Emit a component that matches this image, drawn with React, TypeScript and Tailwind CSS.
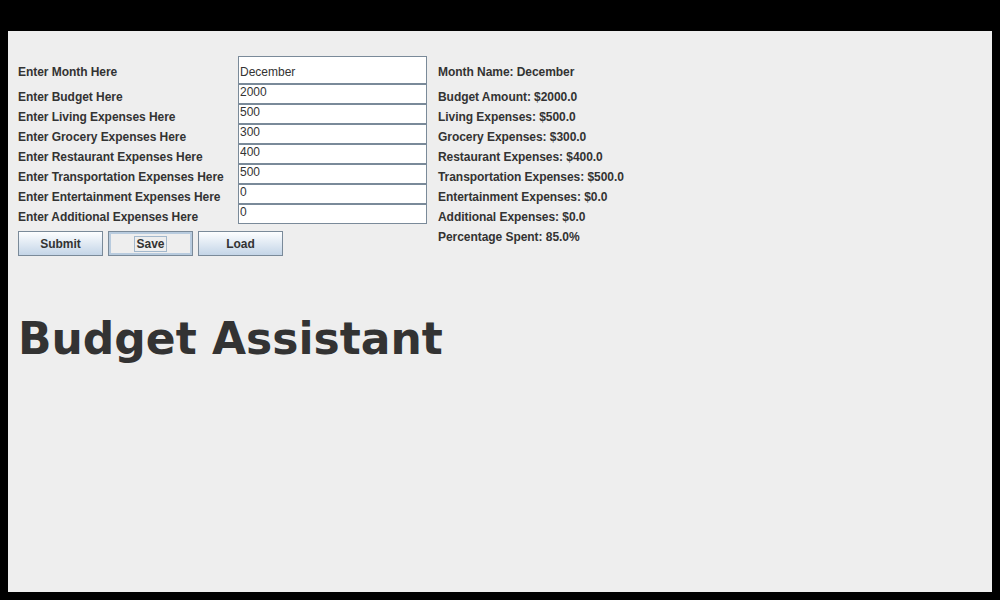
const ROWS = [
  { label: 'Enter Month Here', value: 'December' },
  { label: 'Enter Budget Here', value: '2000' },
  { label: 'Enter Living Expenses Here', value: '500' },
  { label: 'Enter Grocery Expenses Here', value: '300' },
  { label: 'Enter Restaurant Expenses Here', value: '400' },
  { label: 'Enter Transportation Expenses Here', value: '500' },
  { label: 'Enter Entertainment Expenses Here', value: '0' },
  { label: 'Enter Additional Expenses Here', value: '0' },
]

const SUMMARY = [
  'Month Name: December',
  'Budget Amount: $2000.0',
  'Living Expenses: $500.0',
  'Grocery Expenses: $300.0',
  'Restaurant Expenses: $400.0',
  'Transportation Expenses: $500.0',
  'Entertainment Expenses: $0.0',
  'Additional Expenses: $0.0',
  'Percentage Spent: 85.0%',
]

const FONT = "font-['Liberation_Sans',Arial,sans-serif]"

function MetalButton({ label }: { label: string }) {
  return (
    <button
      type="button"
      className="w-[85px] h-[25px] border border-[#7a8a99] bg-gradient-to-b from-[#fdfeff] to-[#c4d5e7] text-[12px] font-bold text-[#333333] leading-[14px]"
    >
      {label}
    </button>
  )
}

export default function App() {
  return (
    <div className={`w-[1000px] h-[600px] bg-black pt-[31px] pl-[8px] ${FONT}`}>
      <div className="w-[984px] h-[561px] bg-[#eeeeee] pt-[25px] pl-[10px] text-[#333333]">
        <div className="flex">
          {/* input side */}
          <div className="flex flex-col">
            <div className="grid grid-cols-[220px_189px]">
              {ROWS.map((row, i) => (
                <div key={row.label} className="contents">
                  <div
                    className={`flex items-end text-[12px] font-bold leading-[14px] tracking-[-0.05px] ${
                      i === 0 ? 'h-[28px] pb-[5px]' : 'h-5'
                    }`}
                  >
                    {row.label}
                  </div>
                  <input
                    type="text"
                    defaultValue={row.value}
                    className={`w-[189px] border border-[#7a8a99] bg-white pl-px pr-0 text-[12px] leading-[14px] text-[#333333] outline-none ${
                      i === 0 ? 'h-[28px] pt-[4px] pb-0' : 'h-5 pt-0 pb-[4px]'
                    }`}
                  />
                </div>
              ))}
            </div>
            <div className="flex gap-[5px] mt-[7px]">
              <MetalButton label="Submit" />
              <button
                type="button"
                className="w-[85px] h-[25px] border border-[#7a8a99] bg-[#eeeeee] shadow-[inset_0_0_0_2px_#b8cbde] flex items-center justify-center"
              >
                <span className="border border-[#a3b8cc] px-px text-[12px] font-bold leading-[14px] text-[#333333]">
                  Save
                </span>
              </button>
              <MetalButton label="Load" />
            </div>
          </div>

          {/* summary side */}
          <div className="flex flex-col ml-[11px]">
            {SUMMARY.map((line, i) => (
              <div
                key={line}
                className={`flex items-end text-[12px] font-bold leading-[14px] tracking-[-0.05px] whitespace-nowrap ${
                  i === 0 ? 'h-[28px] pb-[5px]' : 'h-5'
                }`}
              >
                {line}
              </div>
            ))}
          </div>
        </div>

        <h1 className="mt-[61px] font-['DejaVu_Sans',sans-serif] text-[44px] font-bold leading-none text-[#333333]">
          Budget Assistant
        </h1>
      </div>
    </div>
  )
}
